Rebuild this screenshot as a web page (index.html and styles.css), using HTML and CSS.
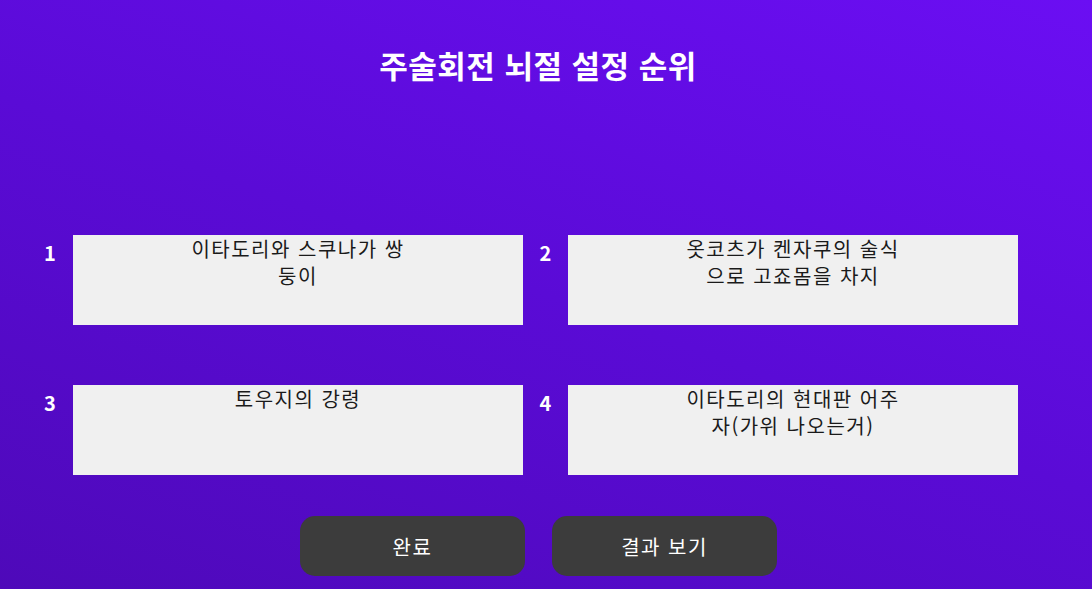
FILE: index.html
```html
<!DOCTYPE html>
<html lang="ko">
<head>
<meta charset="utf-8">
<title>주술회전 뇌절 설정 순위</title>
<link rel="stylesheet" href="styles.css">
</head>
<body>
<main class="page">
  <h1 class="title">주술회전 뇌절 설정 순위</h1>
  <section class="ranks">
    <div class="num">1</div>
    <div class="box"><span>이타도리와 스쿠나가 쌍</span><span>둥이</span></div>
    <div class="num">2</div>
    <div class="box"><span>옷코츠가 켄자쿠의 술식</span><span>으로 고죠몸을 차지</span></div>
    <div class="num">3</div>
    <div class="box"><span>토우지의 강령</span></div>
    <div class="num">4</div>
    <div class="box"><span>이타도리의 현대판 어주</span><span>자(가위 나오는거)</span></div>
  </section>
  <div class="actions">
    <button class="btn">완료</button>
    <button class="btn">결과 보기</button>
  </div>
</main>
</body>
</html>
```

FILE: styles.css
```css
html, body {
  margin: 0;
  padding: 0;
  height: 100%;
}
body {
  background: linear-gradient(200deg, #6b0ef3 0%, #5a0bd6 50%, #4e09b9 100%);
  font-family: "Noto Sans CJK KR", "Noto Sans", sans-serif;
  color: #fff;
  overflow: hidden;
}
.page {
  display: flex;
  flex-direction: column;
  min-height: 589px;
}
.title {
  margin: 45px 0 0;
  padding-right: 16px;
  font-size: 31px;
  letter-spacing: 0.5px;
  line-height: 40px;
  font-weight: 700;
  text-align: center;
  color: #fff;
}
.ranks {
  margin-top: 150px;
  padding-left: 27px;
  display: grid;
  grid-template-columns: 46px 450px 45px 450px;
  grid-auto-rows: 90px;
  row-gap: 60px;
}
.num {
  font-size: 20px;
  font-weight: 700;
  line-height: 36px;
  text-align: center;
  color: #fff;
}
.box {
  background: #f0f0f0;
  color: #1a1a1a;
  display: flex;
  flex-direction: column;
  align-items: center;
  font-size: 20px;
  letter-spacing: 1.5px;
  line-height: 27px;
}
.actions {
  margin-top: 41px;
  padding-left: 300px;
  display: flex;
  gap: 27px;
}
.btn {
  width: 225px;
  height: 60px;
  border: none;
  border-radius: 15px;
  background: #3c3c3c;
  color: #fff;
  font-family: "Noto Sans CJK KR", "Noto Sans", sans-serif;
  font-size: 20px;
  letter-spacing: 1.5px;
  cursor: pointer;
}
```
